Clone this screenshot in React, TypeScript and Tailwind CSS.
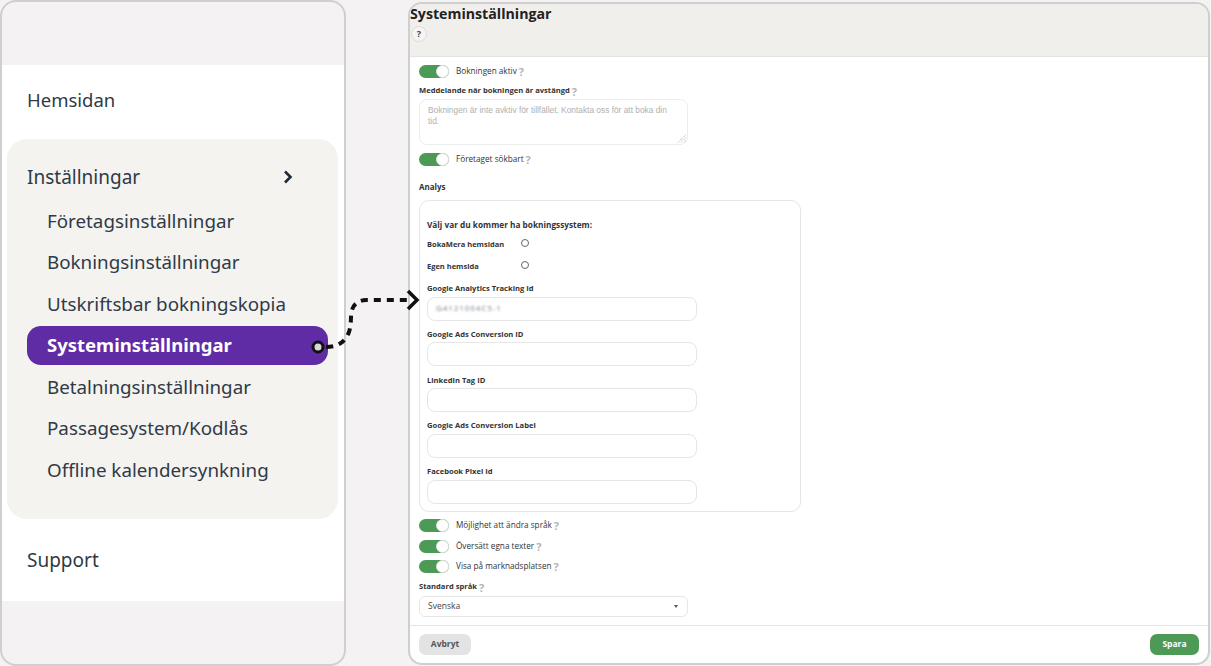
import React from "react";

const settings = [
  "Företagsinställningar",
  "Bokningsinställningar",
  "Utskriftsbar bokningskopia",
  "Systeminställningar",
  "Betalningsinställningar",
  "Passagesystem/Kodlås",
  "Offline kalendersynkning",
];

function Help() {
  return <span className="ml-[2px] text-[11px] leading-none font-bold text-[#b4b4b4]">?</span>;
}

function Toggle({ label, className = "" }: { label: string; className?: string }) {
  return (
    <div className={`flex items-center h-[13px] ${className}`}>
      <div className="relative w-[30px] h-[13px] rounded-full bg-[#4d9a57]">
        <div className="absolute right-0 top-0 w-[13px] h-[13px] rounded-full bg-white border border-[#e2e2e2]" />
      </div>
      <span className="ml-[7px] text-[8.2px] text-[#333]">{label}</span>
      <Help />
    </div>
  );
}

function Field({ label, blurred, className = "mt-[7.25px]" }: { label: string; blurred?: boolean; className?: string }) {
  return (
    <div className={className}>
      <div className="h-[12px] text-[7.6px] leading-[12px] font-bold text-[#333]">{label}</div>
      <div className="mt-[2.5px] w-[270px] h-[24px] rounded-[8px] border border-[#e6e6e6] bg-white flex items-center px-2">
        {blurred && (
          <span className="text-[7.5px] text-[#6f7b88] blur-[0.9px] tracking-tighter">G-4 1 2 1 0 0 4 C 5 - 1</span>
        )}
      </div>
    </div>
  );
}

export default function App() {
  return (
    <div
      className="relative w-[1211px] h-[666px] overflow-hidden bg-[#f4f2f3] flex items-start"
      style={{ fontFamily: '"Open Sans", "Noto Sans", sans-serif' }}
    >
      {/* Left menu */}
      <aside className="w-[346px] h-[666px] shrink-0 rounded-[16px] border-2 border-[#cfcfcf] bg-[#f4f2f3] overflow-hidden">
        <div className="mt-[63px] h-[536px] bg-white pt-[20px] text-[#2f3a46]" style={{ fontFamily: '"Noto Sans", sans-serif' }}>
          <div className="pl-[25px] h-[30px] leading-[30px] text-[18.5px]">Hemsidan</div>
          <div className="mt-[24px] ml-[5px] mr-[6px] h-[380px] rounded-[20px] bg-[#f4f3f0] pt-[23px]">
            <div className="pl-[20px] pr-[45px] h-[30px] flex items-center justify-between text-[19px] leading-[30px]">
              Inställningar
              <svg width="10" height="14" viewBox="0 0 10 14" fill="none">
                <path d="M2 1.500l5.500 5.500-5.500 5.500" stroke="#1f2937" strokeWidth="2.6" />
              </svg>
            </div>
            <div className="mt-[13.5px] pl-[20px] pr-[10px] flex flex-col gap-[11.5px]">
              {settings.map((s) =>
                s === "Systeminställningar" ? (
                  <div
                    key={s}
                    className="-my-[4.5px] h-[39px] pl-[20px] flex items-center rounded-[14px] bg-[#5f2ca5] text-white font-bold text-[18.5px]"
                  >
                    {s}
                  </div>
                ) : (
                  <div key={s} className="pl-[20px] h-[30px] leading-[30px] text-[18.8px]">
                    {s}
                  </div>
                )
              )}
            </div>
          </div>
          <div className="mt-[26px] pl-[25px] h-[30px] leading-[30px] text-[19px]">Support</div>
        </div>
      </aside>

      {/* Right panel */}
      <main className="ml-[62px] mt-[2px] w-[802px] h-[663px] shrink-0 rounded-[14px] border-2 border-[#cfcfcf] bg-white overflow-hidden flex flex-col">
        <header className="h-[53px] shrink-0 bg-[#f1efec] border-b border-[#e4e4e4]">
          <h1 className="h-[20px] text-[14.2px] leading-[20px] font-bold text-[#222]">Systeminställningar</h1>
          <div className="mt-[2px] ml-[1px] w-[16px] h-[16px] rounded-full border border-[#dcdcdc] bg-[#f6f5f3] flex items-center justify-center text-[9px] font-bold text-[#444]">
            ?
          </div>
        </header>

        <div className="flex-1 pl-[9px] pt-[8px]">
          <Toggle label="Bokningen aktiv" />
          <div className="mt-[7px] flex items-center h-[12px] text-[7.6px] font-bold text-[#333]">
            Meddelande när bokningen är avstängd
            <Help />
          </div>
          <div
            className="relative mt-[2px] w-[269px] h-[46px] rounded-[8px] border border-[#ececec] pl-2 pr-[20px] py-[5px] text-[8.35px] leading-[11px] text-[#b0b0b0]"
            style={{ fontFamily: '"Liberation Sans", sans-serif' }}
          >
            Bokningen är inte avktiv för tillfället. Kontakta oss för att boka din tid.
            <svg className="absolute right-px bottom-px" width="9" height="9" viewBox="0 0 9 9" stroke="#999" strokeWidth="1" strokeDasharray="1 1">
              <path d="M8.5 1L1 8.5M8.5 4L4 8.5M8.5 7L7 8.5" />
            </svg>
          </div>
          <Toggle label="Företaget sökbart" className="mt-[8px]" />
          <div className="mt-[15px] h-[12px] text-[8px] leading-[12px] font-bold text-[#333]">Analys</div>

          <section className="mt-[7px] w-[382px] h-[312px] rounded-[10px] border border-[#e6e6e6] pl-[7px] pt-[17px]">
            <div className="h-[14px] text-[8.25px] leading-[14px] font-bold text-[#333]">Välj var du kommer ha bokningssystem:</div>
            <div className="mt-[5px] h-[12px] flex items-center text-[7.5px] font-bold text-[#333]">
              <span className="w-[94px] pt-[3px]">BokaMera hemsidan</span>
              <span className="w-[8px] h-[8px] rounded-full border border-[#666]" />
            </div>
            <div className="mt-[10px] h-[12px] flex items-center text-[7.5px] font-bold text-[#333]">
              <span className="w-[94px] pt-[3px]">Egen hemsida</span>
              <span className="w-[8px] h-[8px] rounded-full border border-[#666]" />
            </div>
            <Field label="Google Analytics Tracking Id" blurred className="mt-[11px]" />
            <Field label="Google Ads Conversion ID" />
            <Field label="Linkedin Tag ID" />
            <Field label="Google Ads Conversion Label" />
            <Field label="Facebook Pixel Id" />
          </section>

          <Toggle label="Möjlighet att ändra språk" className="mt-[7px]" />
          <Toggle label="Översätt egna texter" className="mt-[8px]" />
          <Toggle label="Visa på marknadsplatsen" className="mt-[7px]" />
          <div className="mt-[8px] flex items-center h-[12px] text-[7.6px] font-bold text-[#333]">
            Standard språk
            <Help />
          </div>
          <div className="mt-[3px] w-[269px] h-[21px] rounded-[6px] border border-[#e6e6e6] pl-2 pr-[9px] flex items-center justify-between text-[8.5px] text-[#444]">
            Svenska
            <span className="w-0 h-0 border-x-[2.5px] border-x-transparent border-t-[3px] border-t-[#555]" />
          </div>
        </div>

        <footer className="h-[38px] shrink-0 border-t border-[#e4e4e4] pl-[9px] pr-[9px] pt-[8px] flex items-start justify-between">
          <button className="w-[52px] h-[21px] rounded-[7px] bg-[#e3e3e3] text-[8.5px] font-bold text-[#555]">Avbryt</button>
          <button className="w-[49px] h-[21px] rounded-[7px] bg-[#4d9a57] text-[8.5px] font-bold text-white">Spara</button>
        </footer>
      </main>

      {/* Arrow from menu to panel */}
      <svg className="absolute left-[310px] top-[285px]" width="112" height="75" viewBox="0 0 112 75" fill="none">
        <path d="M16 62C30 62 36 55 39 47C42 37 40 33 42 25C44 18 50 15 56 15H98" stroke="#111" strokeWidth="4" strokeDasharray="7 6" />
        <path d="M98 6l9 9-9 9" stroke="#111" strokeWidth="3.500" />
        <circle cx="8" cy="62" r="5" fill="#d8d8d8" stroke="#111" strokeWidth="3" />
      </svg>
    </div>
  );
}
